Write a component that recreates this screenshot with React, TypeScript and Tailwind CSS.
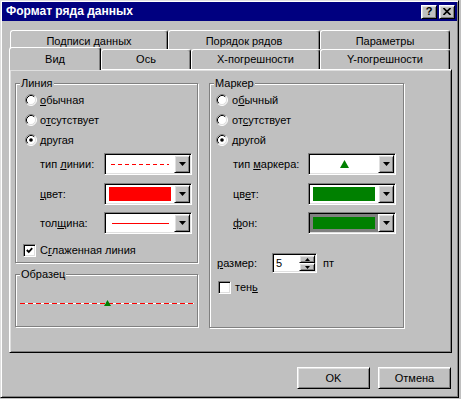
import React from "react";

const raised =
  "border border-t-white border-l-white border-r-black border-b-black shadow-[inset_1px_1px_0_#dfdfdf,inset_-1px_-1px_0_#808080]";
const sunken =
  "border border-t-[#808080] border-l-[#808080] border-r-white border-b-white shadow-[inset_1px_1px_0_#000,inset_-1px_-1px_0_#dfdfdf]";
const etched = "border border-[#808080] shadow-[inset_1px_1px_0_#fff,1px_1px_0_#fff]";
const tabBase =
  "flex justify-center border-t border-l border-r border-t-white border-l-white border-r-black rounded-t-[3px] shadow-[inset_-1px_0_0_#808080]";

const Radio = ({ checked }: { checked?: boolean }) => (
  <svg width="12" height="12" viewBox="0 0 12 12" className="shrink-0">
    <circle cx="6" cy="6" r="5" fill="#fff" />
    <path d="M2.11 9.89A5.5 5.5 0 0 1 9.89 2.11" fill="none" stroke="#808080" />
    <path d="M9.89 2.11A5.5 5.5 0 0 1 2.11 9.89" fill="none" stroke="#fff" />
    <path d="M2.82 9.18A4.5 4.5 0 0 1 9.18 2.82" fill="none" stroke="#000" />
    <path d="M9.18 2.82A4.5 4.5 0 0 1 2.82 9.18" fill="none" stroke="#dfdfdf" />
    {checked && <circle cx="6" cy="6" r="1.8" fill="#000" />}
  </svg>
);

const Check = ({ checked }: { checked?: boolean }) => (
  <div className={`w-[13px] h-[13px] bg-white shrink-0 flex items-center justify-center ${sunken}`}>
    {checked && (
      <svg width="7" height="7" viewBox="0 0 7 7">
        <polyline points="0.8,3 2.8,5 6.2,1.2" fill="none" stroke="#000" strokeWidth="1.8" />
      </svg>
    )}
  </div>
);

const Arrow = () => (
  <svg width="7" height="4" viewBox="0 0 7 4">
    <polygon points="0,0 7,0 3.5,4" fill="#000" />
  </svg>
);

const Combo = ({ children, field = "bg-white" }: { children?: React.ReactNode; field?: string }) => (
  <div className={`w-[88px] h-[22px] flex p-[1px] shrink-0 ${sunken}`}>
    <div className={`flex-1 flex items-center justify-center ${field}`}>{children}</div>
    <div className={`w-[16px] bg-[#c0c0c0] flex items-center justify-center ${raised}`}>
      <Arrow />
    </div>
  </div>
);

const Group = ({
  label,
  className,
  children,
}: {
  label: string;
  className: string;
  children?: React.ReactNode;
}) => (
  <div className={`relative ${etched} ${className}`}>
    <span className="absolute left-[4px] top-[-7px] px-[1px] bg-[#c0c0c0]">{label}</span>
    {children}
  </div>
);

const Field = ({ label, w, children }: { label: React.ReactNode; w: string; children: React.ReactNode }) => (
  <div className="flex items-center h-[22px]">
    <span className={w}>{label}</span>
    {children}
  </div>
);

export default function App() {
  return (
    <div className="w-[461px] h-[399px] bg-[#c0c0c0] font-['Liberation_Sans',Arial,sans-serif] text-[11px] leading-[13px] text-black">
      <div className="w-[459px] h-[398px] p-[1px] border border-t-[#dfdfdf] border-l-[#dfdfdf] border-r-black border-b-black shadow-[inset_1px_1px_0_#fff,inset_-1px_-1px_0_#808080]">
        {/* title */}
        <div className="h-[19px] bg-[#000080] flex items-center justify-between pl-[4px] pr-[2px]">
          <span className="text-white font-bold text-[12px]">Формат ряда данных</span>
          <div className="flex gap-[2px]">
            <div className={`w-[16px] h-[14px] bg-[#c0c0c0] flex items-center justify-center font-bold text-[11px] ${raised}`}>
              ?
            </div>
            <div className={`w-[16px] h-[14px] bg-[#c0c0c0] flex items-center justify-center ${raised}`}>
              <svg width="8" height="7" viewBox="0 0 8 7">
                <path d="M0.5 0 L7.5 7 M7.5 0 L0.5 7" stroke="#000" strokeWidth="1.6" />
              </svg>
            </div>
          </div>
        </div>

        <div className="ml-[7px] mt-[9px] w-[443px]">
          {/* tabs */}
          <div className="flex h-[19px] pl-[1px]">
            <div className={`${tabBase} w-[158px] h-[19px] pt-[4px]`}>Подписи данных</div>
            <div className={`${tabBase} w-[152px] h-[19px] pt-[4px]`}>Порядок рядов</div>
            <div className={`${tabBase} w-[130px] h-[19px] pt-[4px]`}>Параметры</div>
          </div>
          <div className="flex h-[20px] items-start">
            <div className={`${tabBase} relative z-10 -mt-[2px] w-[92px] h-[23px] pt-[5px] bg-[#c0c0c0]`}>Вид</div>
            <div className={`${tabBase} w-[90px] h-[20px] pt-[3px]`}>Ось</div>
            <div className={`${tabBase} w-[129px] h-[20px] pt-[3px]`}>X-погрешности</div>
            <div className={`${tabBase} w-[130px] h-[20px] pt-[3px]`}>Y-погрешности</div>
          </div>

          {/* panel */}
          <div className={`h-[284px] flex gap-[11px] pl-[5px] pt-[13px] ${raised}`}>
            <div className="w-[183px] flex flex-col">
              <Group label="Линия" className="h-[180px]">
                <div className="flex flex-col pl-[9px] pt-[6px]">
                  <div className="flex items-center gap-[3px] h-[20px]">
                    <Radio />
                    <span><u>о</u>бычная</span>
                  </div>
                  <div className="flex items-center gap-[3px] h-[20px]">
                    <Radio />
                    <span>о<u>т</u>сутствует</span>
                  </div>
                  <div className="flex items-center gap-[3px] h-[20px]">
                    <Radio checked />
                    <span>другая</span>
                  </div>
                </div>
                <div className="flex flex-col pl-[24px] mt-[3px]">
                  <Field label={<>тип <u>л</u>инии:</>} w="w-[64px]">
                    <Combo>
                      <svg width="58" height="1" viewBox="0 0 58 1">
                        <line x1="0" y1="0.5" x2="58" y2="0.5" stroke="#ff0000" strokeDasharray="4 3" />
                      </svg>
                    </Combo>
                  </Field>
                  <div className="mt-[8px]">
                    <Field label={<><u>ц</u>вет:</>} w="w-[64px]">
                      <Combo>
                        <div className="self-stretch flex-1 mx-[3px] my-[2px] bg-[#ff0000]" />
                      </Combo>
                    </Field>
                  </div>
                  <div className="mt-[7px]">
                    <Field label={<>тол<u>щ</u>ина:</>} w="w-[64px]">
                      <Combo>
                        <div className="w-[57px] h-[1px] bg-[#ff0000]" />
                      </Combo>
                    </Field>
                  </div>
                </div>
                <div className="flex items-center gap-[4px] pl-[7px] mt-[10px]">
                  <Check checked />
                  <span>С<u>г</u>лаженная линия</span>
                </div>
              </Group>

              <Group label="Образец" className="h-[53px] mt-[11px]">
                <svg width="174" height="8" viewBox="0 0 174 8" className="ml-[4px] mt-[24px]">
                  <line x1="0" y1="4.5" x2="174" y2="4.5" stroke="#fff" />
                  <line x1="0" y1="4.5" x2="174" y2="4.5" stroke="#ff0000" strokeDasharray="5 3" />
                  <polygon points="87.5,1 91,7 84,7" fill="#008000" />
                </svg>
              </Group>
            </div>

            <Group label="Маркер" className="w-[195px] h-[245px]">
              <div className="flex flex-col pl-[6px] pt-[6px]">
                <div className="flex items-center gap-[4px] h-[20px]">
                  <Radio />
                  <span>о<u>б</u>ычный</span>
                </div>
                <div className="flex items-center gap-[4px] h-[20px]">
                  <Radio />
                  <span>от<u>с</u>утствует</span>
                </div>
                <div className="flex items-center gap-[4px] h-[20px]">
                  <Radio checked />
                  <span>другой</span>
                </div>
              </div>
              <div className="flex flex-col pl-[23px] mt-[3px]">
                <Field label={<>тип <u>м</u>аркера:</>} w="w-[75px]">
                  <Combo>
                    <svg width="9" height="8" viewBox="0 0 9 8">
                      <polygon points="4.5,0 9,8 0,8" fill="#008000" />
                    </svg>
                  </Combo>
                </Field>
                <div className="mt-[8px]">
                  <Field label={<>цв<u>е</u>т:</>} w="w-[75px]">
                    <Combo>
                      <div className="self-stretch flex-1 mx-[3px] my-[2px] bg-[#008000]" />
                    </Combo>
                  </Field>
                </div>
                <div className="mt-[7px]">
                  <Field label={<><u>ф</u>он:</>} w="w-[75px]">
                    <Combo field="bg-[#808080]">
                      <div className="self-stretch flex-1 m-[3px] bg-[#008000]" />
                    </Combo>
                  </Field>
                </div>
              </div>
              <div className="flex items-center h-[20px] pl-[7px] mt-[19px]">
                <span className="w-[55px]">
                  <u>р</u>азмер:
                </span>
                <div className={`w-[45px] h-[20px] flex p-[1px] bg-white ${sunken}`}>
                  <span className="flex-1 flex items-center pl-[2px]">5</span>
                  <div className="w-[16px] flex flex-col">
                    <div className={`h-[8px] bg-[#c0c0c0] flex items-center justify-center ${raised}`}>
                      <svg width="5" height="3" viewBox="0 0 5 3">
                        <polygon points="2.5,0 5,3 0,3" fill="#000" />
                      </svg>
                    </div>
                    <div className={`h-[8px] bg-[#c0c0c0] flex items-center justify-center ${raised}`}>
                      <svg width="5" height="3" viewBox="0 0 5 3">
                        <polygon points="0,0 5,0 2.5,3" fill="#000" />
                      </svg>
                    </div>
                  </div>
                </div>
                <span className="ml-[6px]">пт</span>
              </div>
              <div className="flex items-center gap-[4px] pl-[8px] mt-[8px]">
                <Check />
                <span>тен<u>ь</u></span>
              </div>
            </Group>
          </div>

          {/* buttons */}
          <div className="flex justify-end gap-[8px] mt-[14px] pr-[1px]">
            <div className={`w-[73px] h-[22px] flex items-center justify-center ${raised}`}>OK</div>
            <div className={`w-[73px] h-[22px] flex items-center justify-center ${raised}`}>Отмена</div>
          </div>
        </div>
      </div>
    </div>
  );
}
